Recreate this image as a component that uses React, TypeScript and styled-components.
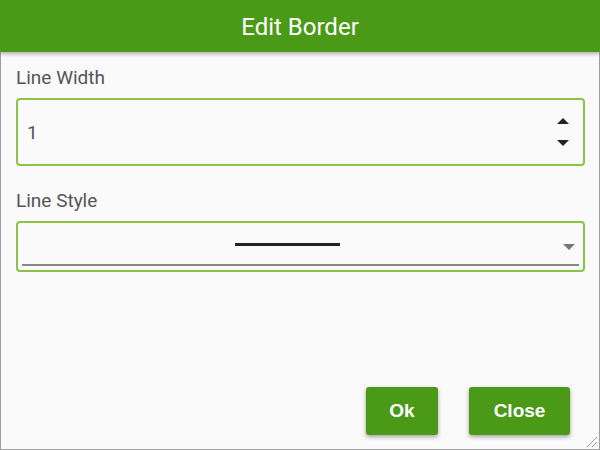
import React from "react";
import styled, {createGlobalStyle} from "styled-components";

const GlobalStyle = createGlobalStyle`
  html, body {
    margin: 0;
    padding: 0;
    background: #fafafa;
  }
  * {
    box-sizing: border-box;
  }
`;

const Window = styled.div`
  position: relative;
  width: 600px;
  height: 450px;
  display: flex;
  flex-direction: column;
  background: #fafafa;
  border: 1px solid #9e9e9e;
  font-family: Roboto, "Liberation Sans", sans-serif;
`;

const Header = styled.div`
  height: 52px;
  margin: -1px -1px 0;
  padding-top: 2px;
  display: flex;
  align-items: center;
  justify-content: center;
  background: #4a9a17;
  color: #fff;
  font-size: 24px;
  box-shadow: 0 2px 4px rgba(0, 0, 0, 0.3);
  z-index: 1;
`;

const Body = styled.div`
  flex: 1;
  display: flex;
  flex-direction: column;
  padding: 14px 14px 0 15px;
`;

const Label = styled.div`
  font-size: 19px;
  color: #555;
  line-height: 24px;
  margin-bottom: 8px;
`;

const Field = styled.div<{ $height: number }>`
  position: relative;
  height: ${p => p.$height}px;
  border: 2px solid #8bc34a;
  border-radius: 4px;
  display: flex;
  align-items: center;
  margin-bottom: 23px;
`;

const NumberText = styled.span`
  padding-left: 9px;
  font-size: 19px;
  color: #555;
  flex: 1;
`;

const Spinner = styled.div`
  display: flex;
  flex-direction: column;
  gap: 16px;
  margin-right: 14px;
`;

const Arrow = styled.div<{ $up?: boolean; $color: string }>`
  width: 0;
  height: 0;
  border-left: 6px solid transparent;
  border-right: 6px solid transparent;
  ${p => p.$up
    ? `border-bottom: 6px solid ${p.$color};`
    : `border-top: 6px solid ${p.$color};`}
`;

const SelectInner = styled.div`
  flex: 1;
  align-self: stretch;
  margin: 0 4px 4px;
  padding-right: 26px;
  display: flex;
  align-items: center;
  justify-content: center;
  border-bottom: 2px solid #888;
  position: relative;
`;

const Sample = styled.div`
  width: 105px;
  height: 3px;
  background: #222;
  margin-top: 2px;
`;

const DropArrow = styled.div`
  position: absolute;
  right: 4px;
  top: 21px;
`;

const Footer = styled.div`
  display: flex;
  justify-content: flex-end;
  gap: 31px;
  padding: 0 29px 14px 0;
  margin-top: auto;
`;

const Button = styled.button<{ $width: number }>`
  width: ${p => p.$width}px;
  height: 48px;
  border: none;
  border-radius: 3px;
  background: #4a9a17;
  color: #fff;
  font-family: "Liberation Sans", Arial, sans-serif;
  font-weight: bold;
  font-size: 19px;
  box-shadow: 0 2px 4px rgba(0, 0, 0, 0.35);
`;

const Grip = styled.svg`
  position: absolute;
  right: 1px;
  bottom: 1px;
`;

function App() {
    return (
        <>
            <GlobalStyle/>
            <Window>
                <Header>Edit Border</Header>
                <Body>
                    <Label>Line Width</Label>
                    <Field $height={68}>
                        <NumberText>1</NumberText>
                        <Spinner>
                            <Arrow $up $color="#222"/>
                            <Arrow $color="#222"/>
                        </Spinner>
                    </Field>
                    <Label>Line Style</Label>
                    <Field $height={51}>
                        <SelectInner>
                            <Sample/>
                            <DropArrow>
                                <Arrow $color="#777"/>
                            </DropArrow>
                        </SelectInner>
                    </Field>
                </Body>
                <Footer>
                    <Button $width={72}>Ok</Button>
                    <Button $width={101}>Close</Button>
                </Footer>
                <Grip width="14" height="14" viewBox="0 0 14 14">
                    <line x1="13" y1="3" x2="3" y2="13" stroke="#999" strokeWidth="1"/>
                    <line x1="13" y1="8" x2="8" y2="13" stroke="#999" strokeWidth="1"/>
                </Grip>
            </Window>
        </>
    );
}

export default App;
